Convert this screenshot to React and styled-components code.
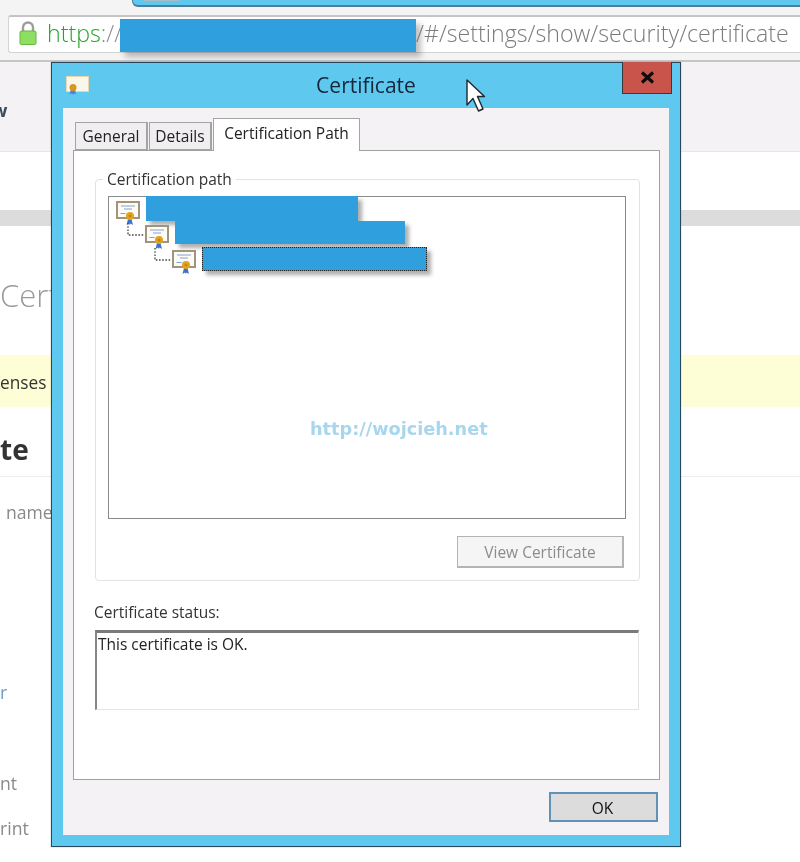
import React from "react";
import styled, { createGlobalStyle } from "styled-components";

const Global = createGlobalStyle`
  * { box-sizing: border-box; }
  html, body { margin: 0; padding: 0; background: #fff; }
  body { font-family: "Open Sans", "Noto Sans", sans-serif; }
`;

const Screen = styled.div`
  position: relative;
  width: 800px;
  height: 862px;
  overflow: hidden;
  background: #fff;
  filter: blur(0.4px);
`;

const Toolbar = styled.header`
  height: 62px;
  background: #f4f4f4;
  border-bottom: 2px solid #c6c6c6;
`;

const BackWindow = styled.div`
  height: 7px;
  margin: 0 0 8px 132px;
  padding-left: 11px;
  background: #5ec8ef;
  border: 1px solid #4a7f9c;
  border-top: 0;
  border-right: 0;
  border-bottom-left-radius: 6px;
  border-bottom-width: 2px;
`;

const BackWindowTab = styled.div`
  width: 35px;
  height: 1px;
  background: #a9bcc8;
`;

const UrlBar = styled.div`
  height: 38px;
  margin-left: 8px;
  display: flex;
  align-items: center;
  background: #fff;
  border: 1px solid #d4d4d4;
  border-top: 2px solid #c4c4c4;
  border-right: 0;
  border-radius: 3px 0 0 3px;
  padding-left: 10px;
  font-size: 23.2px;
  font-weight: 300;
  white-space: nowrap;
`;

const LockSlot = styled.div`
  flex: none;
  display: flex;
  margin-bottom: 3px;
`;

const Scheme = styled.span`
  margin: 0 0 4px 10px;
  width: 73px;
  color: #25a525;
  flex: none;
`;

const SchemeRest = styled.span`
  color: #8d8d8d;
`;

const UrlMask = styled.div`
  flex: none;
  width: 296px;
  height: 33px;
  margin-top: 2px;
  background: #2fa0dd;
  box-shadow: 5px 5px 6px rgba(0, 0, 0, 0.25);
`;

const UrlRest = styled.span`
  margin-bottom: 4px;
  color: #7b7b7b;
`;

const PageHeader = styled.div`
  height: 90px;
  background: #f4f2f5;
  border-bottom: 1px solid #e6e6e6;
  display: flex;
  align-items: center;
  padding-top: 6px;
`;

const BrandCut = styled.span`
  margin-left: -8px;
  font-size: 18px;
  font-weight: 700;
  color: #3c4c5c;
`;

const Band = styled.div`
  height: 16px;
  margin-top: 58px;
  background: #dcdcdc;
`;

const PageTitle = styled.h1`
  margin: 49px 0 0;
  height: 40px;
  font-size: 31px;
  line-height: 40px;
  font-weight: 300;
  color: #9a9a9a;
`;

const Notice = styled.div`
  height: 52px;
  margin-top: 40px;
  background: #fefed6;
  display: flex;
  align-items: center;
  padding-top: 3px;
  font-size: 17.3px;
  color: #333;
`;

const SectionTitle = styled.h2`
  margin: 0;
  height: 70px;
  padding-top: 23px;
  font-size: 28px;
  line-height: 38px;
  font-weight: 700;
  color: #333;
  border-bottom: 1px solid #ececec;
`;

const FieldLabel = styled.div`
  margin-top: ${(p) => p.$gap}px;
  margin-left: ${(p) => p.$indent || 0}px;
  height: 24px;
  line-height: 24px;
  font-size: 17.6px;
  color: ${(p) => (p.$link ? "#6d9cc2" : "#8a8a8a")};
`;

const Dialog = styled.section`
  position: absolute;
  left: 51px;
  top: 62px;
  width: 630px;
  height: 785px;
  display: flex;
  flex-direction: column;
  padding: 0 11px 11px;
  background: #5ec8ef;
  border: 1px solid #27475c;
  box-shadow: 0 0 1px rgba(0, 0, 0, 0.4);
`;

const TitleBar = styled.div`
  flex: none;
  height: 45px;
  display: grid;
  grid-template-columns: 1fr auto 1fr;
  align-items: center;
`;

const DialogTitle = styled.div`
  margin-bottom: 2px;
  font-size: 21px;
  color: #16263a;
`;

const CloseButton = styled.div`
  justify-self: end;
  align-self: start;
  width: 50px;
  height: 32px;
  margin: -1px -3px 0 0;
  display: flex;
  align-items: center;
  justify-content: center;
  background: #c9544b;
  border: 1px solid #3a3a3a;
  border-top: 0;
`;

const Client = styled.div`
  flex: 1;
  display: flex;
  flex-direction: column;
  padding: 11px 9px 0 10px;
  background: #f5f2f6;
  font-size: 15.5px;
  color: #222;
`;

const Tabs = styled.div`
  flex: none;
  height: 31px;
  padding-left: 2px;
  display: flex;
  align-items: flex-end;
`;

const Tab = styled.div`
  width: ${(p) => p.$w}px;
  height: ${(p) => (p.$active ? 33 : 28)}px;
  margin-bottom: ${(p) => (p.$active ? -1 : 0)}px;
  margin-right: ${(p) => (p.$active ? 0 : 1)}px;
  padding-bottom: ${(p) => (p.$active ? 5 : 0)}px;
  display: flex;
  align-items: center;
  justify-content: center;
  background: ${(p) => (p.$active ? "#fff" : "#f0eef1")};
  border: 1px solid #a4a4a4;
  border-width: ${(p) => (p.$active ? "1px 1px 0 1px" : "1px 2px 1px 1px")};
  position: relative;
  z-index: ${(p) => (p.$active ? 1 : 0)};
`;

const Pane = styled.div`
  height: 630px;
  padding: 18px 19px 0 21px;
  background: #fff;
  border: 1px solid #a0a0a0;
`;

const GroupBox = styled.fieldset`
  margin: 0;
  height: 412px;
  padding: 7px 13px 0 12px;
  border: 1px solid #e2e2e2;
  border-radius: 4px;
`;

const GroupLegend = styled.legend`
  margin-left: -5px;
  padding: 0 4px;
  line-height: 20px;
  color: #333;
`;

const Tree = styled.div`
  position: relative;
  height: 323px;
  border: 1px solid #8a8a8a;
  background: #fff;
`;

const TreeRow = styled.div`
  height: ${(p) => p.$h}px;
  margin-top: ${(p) => p.$lift || 0}px;
  padding-left: ${(p) => p.$indent}px;
  display: flex;
  align-items: flex-start;
  gap: 6px;
`;

const IconCell = styled.div`
  flex: none;
  margin-top: ${(p) => p.$top}px;
`;

const Redaction = styled.div`
  flex: none;
  width: ${(p) => p.$w}px;
  height: ${(p) => p.$h}px;
  background: #2fa0dd;
  box-shadow: 4px 4px 4px rgba(0, 0, 0, 0.32);
  border: ${(p) => (p.$focus ? "1px dotted #222" : "0")};
`;

const Watermark = styled.div`
  position: absolute;
  left: 201px;
  top: 220px;
  font-family: "DejaVu Sans", sans-serif;
  font-weight: 700;
  font-size: 17.7px;
  line-height: 24px;
  color: #a9d6ef;
  white-space: nowrap;
`;

const ViewButton = styled.div`
  width: 167px;
  height: 32px;
  margin: 17px 2px 0 auto;
  display: flex;
  align-items: center;
  justify-content: center;
  background: #f5f5f5;
  border: 2px solid #b4b4b4;
  border-width: 1px 2px 2px 1px;
  color: #8c8c8c;
`;

const StatusLabel = styled.div`
  margin: 21px 0 8px -1px;
  height: 20px;
  line-height: 20px;
  color: #333;
`;

const StatusBox = styled.div`
  height: 80px;
  margin-right: 1px;
  padding: 1px 0 0 1px;
  background: #fff;
  border-style: solid;
  border-width: 3px 1px 1px 2px;
  border-color: #7a7a7a #e4e4e4 #e4e4e4 #868686;
  line-height: 20px;
  color: #222;
`;

const Footer = styled.div`
  display: flex;
  justify-content: flex-end;
  padding: 12px 2px 0 0;
`;

const OkButton = styled.div`
  width: 109px;
  height: 30px;
  padding: 1px 2px 0 0;
  display: flex;
  align-items: center;
  justify-content: center;
  background: #dcdcdc;
  border: 2px solid #6291b8;
  color: #111;
`;

const Cursor = styled.svg`
  position: absolute;
  left: 466px;
  top: 79px;
`;

const LockIcon = () => (
  <svg width="18" height="24" viewBox="0 0 18 24" style={{ display: "block" }}>
    <path d="M4 11V6.500a5 5 0 0 1 10 0V11" fill="none" stroke="#9d9d9d" strokeWidth="2.400" />
    <rect x="1" y="10" width="16" height="13.500" rx="1.500" fill="#8ede62" stroke="#62b53e" />
  </svg>
);

const CertIcon = ({ connector }) => (
  <svg width="24" height="24" viewBox="0 0 24 24" overflow="visible" style={{ display: "block" }}>
    {connector && (
      <path d="M-17 -2V10H-1" fill="none" stroke="#444" strokeWidth="1.300" strokeDasharray="1.600 1.600" />
    )}
    <rect x="1" y="1" width="22" height="16" fill="#fdfbf6" stroke="#a2947a" strokeWidth="2" />
    <path d="M5 5h14M8 8h8M4.500 12.500h5" stroke="#7fa2d6" strokeWidth="1" />
    <path d="M12 18l-1.500 6 2.500-1.500 1 1.500.500-1.500 2.500 1.500-1.500-6z" fill="#3a72d0" />
    <circle cx="14" cy="15" r="4" fill="#e0a41e" />
    <circle cx="14" cy="15" r="1.500" fill="#c98412" />
  </svg>
);

const TitleIcon = () => (
  <svg width="24" height="19" viewBox="0 0 24 19" style={{ display: "block", marginLeft: 3 }}>
    <rect x="0.500" y="0.500" width="22" height="15" fill="#fbf6ea" stroke="#e6d7ae" />
    <path d="M5 13l-1.500 5.500 2-1 1.500 1 1.500-1 1.500 1L9 13z" fill="#4a86d8" />
    <circle cx="7" cy="11.500" r="3.500" fill="#d9951f" />
  </svg>
);

export default function App() {
  return (
    <Screen>
      <Global />
      <Toolbar>
        <BackWindow>
          <BackWindowTab />
        </BackWindow>
        <UrlBar>
          <LockSlot>
            <LockIcon />
          </LockSlot>
          <Scheme>
            https<SchemeRest>://</SchemeRest>
          </Scheme>
          <UrlMask />
          <UrlRest>/#/settings/show/security/certificate</UrlRest>
        </UrlBar>
      </Toolbar>

      <main>
        <PageHeader>
          <BrandCut>w</BrandCut>
        </PageHeader>
        <Band />
        <PageTitle>Cert</PageTitle>
        <Notice>enses</Notice>
        <SectionTitle>te</SectionTitle>
        <FieldLabel $gap={23} $indent={6}>name</FieldLabel>
        <FieldLabel $gap={156} $link>r</FieldLabel>
        <FieldLabel $gap={67}>nt</FieldLabel>
        <FieldLabel $gap={21}>rint</FieldLabel>
      </main>

      <Dialog>
        <TitleBar>
          <TitleIcon />
          <DialogTitle>Certificate</DialogTitle>
          <CloseButton>
            <svg width="15" height="13" viewBox="0 0 15 13">
              <path d="M2 1.500L13 11.500M13 1.500L2 11.500" stroke="#0d0d0d" strokeWidth="3.200" />
            </svg>
          </CloseButton>
        </TitleBar>
        <Client>
          <Tabs>
            <Tab $w={73}>General</Tab>
            <Tab $w={63}>Details</Tab>
            <Tab $w={147} $active>Certification Path</Tab>
          </Tabs>
          <Pane>
            <GroupBox>
              <GroupLegend>Certification path</GroupLegend>
              <Tree>
                <TreeRow $h={25} $indent={7} $lift={-1}>
                  <IconCell $top={5}><CertIcon /></IconCell>
                  <Redaction $w={212} $h={25} />
                </TreeRow>
                <TreeRow $h={26} $indent={36}>
                  <IconCell $top={4}><CertIcon connector /></IconCell>
                  <Redaction $w={230} $h={23} />
                </TreeRow>
                <TreeRow $h={24} $indent={63}>
                  <IconCell $top={3}><CertIcon connector /></IconCell>
                  <Redaction $w={225} $h={24} $focus />
                </TreeRow>
                <Watermark>http://wojcieh.net</Watermark>
              </Tree>
              <ViewButton>View Certificate</ViewButton>
            </GroupBox>
            <StatusLabel>Certificate status:</StatusLabel>
            <StatusBox>This certificate is OK.</StatusBox>
          </Pane>
          <Footer>
            <OkButton>OK</OkButton>
          </Footer>
        </Client>
      </Dialog>

      <Cursor width="20" height="34" viewBox="0 0 20 34">
        <path d="M1 1V26L7 19.500L12.500 32L17 30L11.500 17.500H18.500Z" fill="#fff" stroke="#1d2730" strokeWidth="1.400" strokeLinejoin="round" />
      </Cursor>
    </Screen>
  );
}
